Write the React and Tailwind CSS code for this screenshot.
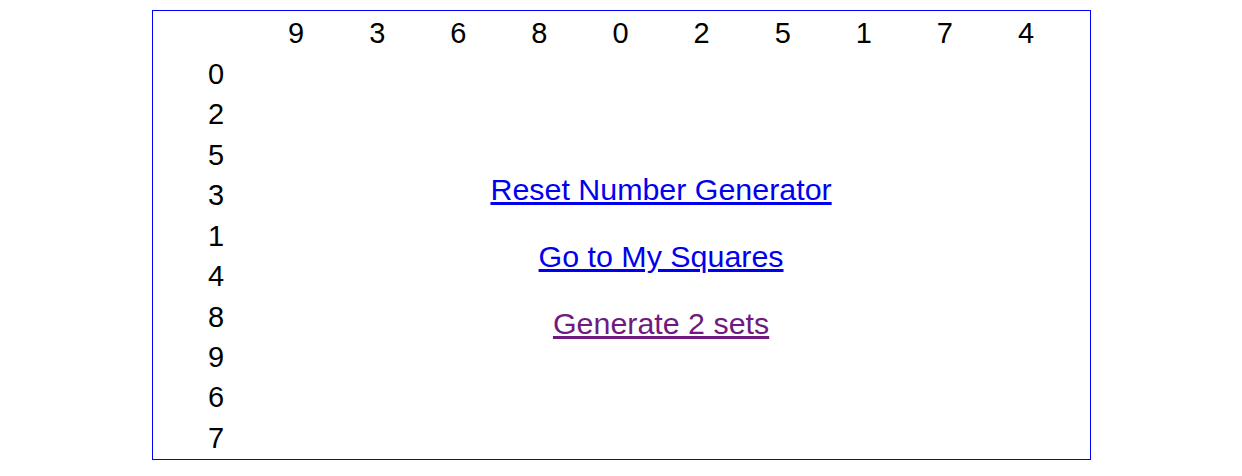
const cols = [9, 3, 6, 8, 0, 2, 5, 1, 7, 4];
const rows = [0, 2, 5, 3, 1, 4, 8, 9, 6, 7];

export default function App() {
  return (
    <div className="w-full bg-white pt-[10px] font-['Liberation_Sans',Arial,sans-serif] text-[29px] text-black">
      <div className="mx-auto w-[939px] border border-[#0000ff] pt-[3px] pl-[22px]">
        <div className="grid grid-cols-[repeat(11,81.1px)] grid-rows-[repeat(11,40.44px)]">
          <div className="col-start-1 row-start-1" />
          {cols.map((n, i) => (
            <div key={"c" + i} className="row-start-1 flex items-center justify-center">
              {n}
            </div>
          ))}
          {rows.map((n, i) => (
            <div
              key={"r" + i}
              className="col-start-1 flex items-center justify-center pl-[2px]"
              style={{ gridRowStart: i + 2 }}
            >
              {n}
            </div>
          ))}
          <div className="col-start-2 col-span-10 row-start-2 row-span-10 flex flex-col items-center justify-center gap-[32px] text-[30.4px] leading-[35px]">
            <a href="#" className="text-[#0000ee] underline">Reset Number Generator</a>
            <a href="#" className="text-[#0000ee] underline">Go to My Squares</a>
            <a href="#" className="text-[#701a80] underline">Generate 2 sets</a>
          </div>
        </div>
      </div>
    </div>
  );
}
